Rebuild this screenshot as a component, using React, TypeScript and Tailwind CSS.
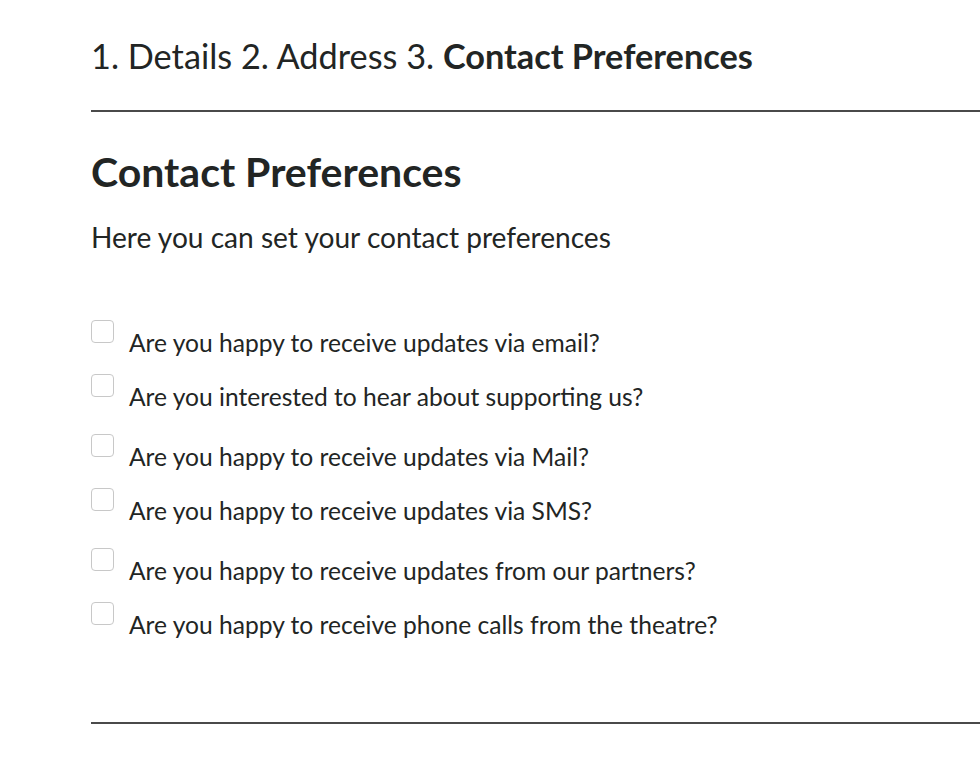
import React from "react";

const groups = [
  ["Are you happy to receive updates via email?", "Are you interested to hear about supporting us?"],
  ["Are you happy to receive updates via Mail?", "Are you happy to receive updates via SMS?"],
  ["Are you happy to receive updates from our partners?", "Are you happy to receive phone calls from the theatre?"],
];

export default function App() {
  return (
    <div className="w-[980px] h-[770px] bg-white overflow-hidden text-[#222524] [font-family:Lato,'Noto_Sans',sans-serif]">
      <div className="pl-[91px]">
        <div className="pt-[35px] h-[110px] text-[34.3px] leading-[42px]">
          1. Details 2. Address 3. <span className="font-bold">Contact Preferences</span>
        </div>
        <div className="h-[2px] bg-[#4a4a4a]" />
        <h1 className="mt-[38px] text-[41px] leading-[44px] font-bold">Contact Preferences</h1>
        <p className="mt-[26px] text-[28.1px] leading-[34px]">Here you can set your contact preferences</p>
        <div className="mt-[66px] flex flex-col gap-[6px]">
          {groups.map((g, i) => (
            <div key={i} className="flex flex-col">
              {g.map((t) => (
                <label key={t} className="flex items-start h-[54px]">
                  <span className="w-[23px] h-[23px] border border-[#c8c8c8] rounded-[4px] bg-white shrink-0" />
                  <span className="ml-[15px] mt-[8px] text-[24.6px] leading-[30px]">{t}</span>
                </label>
              ))}
            </div>
          ))}
        </div>
        <div className="mt-[66px] h-[2px] bg-[#4a4a4a]" />
      </div>
    </div>
  );
}
